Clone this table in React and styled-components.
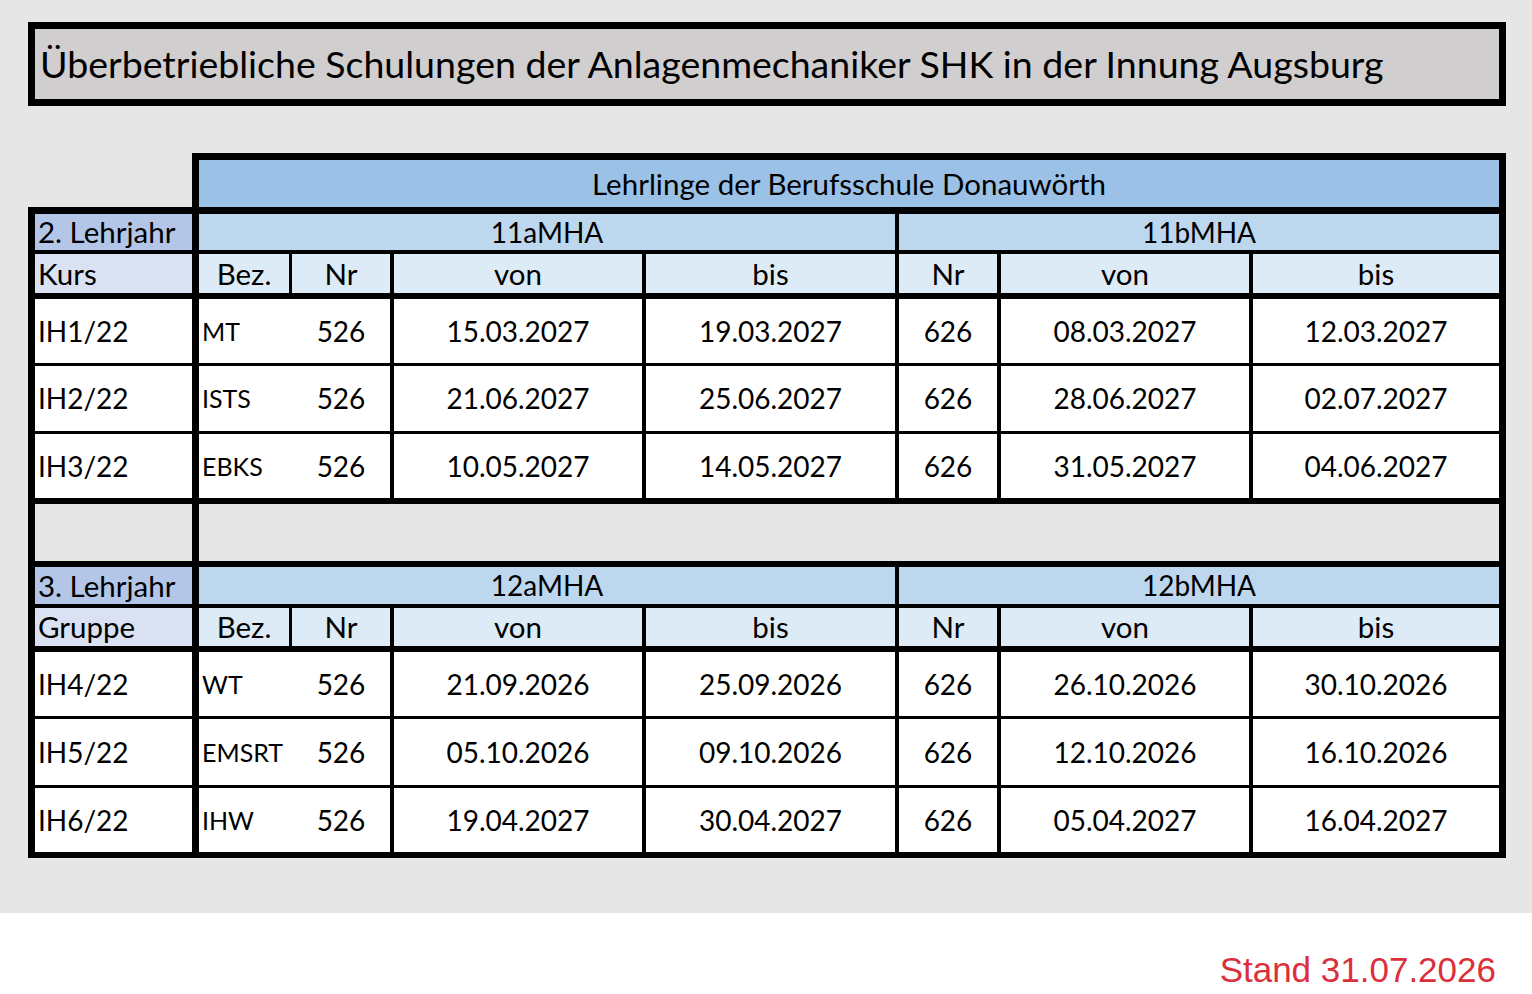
import styled, { createGlobalStyle } from "styled-components";

const GlobalStyle = createGlobalStyle`
  html, body {
    margin: 0;
    padding: 0;
    background: #ffffff;
  }
  body {
    font-family: Lato, "Open Sans", sans-serif;
    color: #000;
  }
`;

const Page = styled.div`
  width: 1532px;
`;

const Sheet = styled.div`
  background: #e6e6e6;
  padding: 22px 26px 55px 28px;
  display: flex;
  flex-direction: column;
  gap: 47px;
`;

const TitleBox = styled.div`
  box-sizing: border-box;
  height: 84px;
  border: 7px solid #000;
  background: #d0cece;
  display: flex;
  align-items: center;
  padding-left: 5px;
`;

const Title = styled.h1`
  margin: 0;
  font-weight: 400;
  font-size: 37.5px;
  line-height: 1;
  white-space: nowrap;
`;

const Table = styled.table`
  width: 1478px;
  table-layout: fixed;
  border-collapse: separate;
  border-spacing: 0;
`;

const Col = styled.col`
  width: ${(p) => p.$w}px;
`;

const Row = styled.tr`
  height: ${(p) => p.$h}px;
`;

const Cell = styled.td`
  box-sizing: border-box;
  padding: 0 ${(p) => (p.$left ? 3 : 2)}px;
  font-size: ${(p) => p.$size || 28}px;
  line-height: 1.15;
  white-space: nowrap;
  text-align: ${(p) => (p.$left ? "left" : "center")};
  vertical-align: middle;
  background: ${(p) => p.$bg || "#ffffff"};
  border-style: solid;
  border-color: #000;
  border-width: ${(p) => p.$t || 0}px ${(p) => p.$r ?? 4}px
    ${(p) => p.$b ?? 3}px ${(p) => p.$l || 0}px;
`;

const Footer = styled.div`
  box-sizing: border-box;
  height: 81px;
  padding: 39px 36px 0 0;
  display: flex;
  justify-content: flex-end;
`;

const Stand = styled.div`
  font-family: "Liberation Sans", Arial, sans-serif;
  font-size: 35px;
  line-height: 35px;
  color: #dc2f3c;
`;

const colors = {
  head: "#9bc2e6",
  group: "#bdd7ee",
  sub: "#ddebf7",
  year: "#b4c6e7",
  kind: "#d9e1f2",
  gap: "#e6e6e6",
};

const widths = [171, 93, 102, 252, 253, 102, 252, 253];
const label = 29.5;

const block1 = {
  year: "2. Lehrjahr",
  kind: "Kurs",
  a: "11aMHA",
  b: "11bMHA",
  rows: [
    ["IH1/22", "MT", "526", "15.03.2027", "19.03.2027", "626", "08.03.2027", "12.03.2027"],
    ["IH2/22", "ISTS", "526", "21.06.2027", "25.06.2027", "626", "28.06.2027", "02.07.2027"],
    ["IH3/22", "EBKS", "526", "10.05.2027", "14.05.2027", "626", "31.05.2027", "04.06.2027"],
  ],
  heights: [67, 68, 70],
};

const block2 = {
  year: "3. Lehrjahr",
  kind: "Gruppe",
  a: "12aMHA",
  b: "12bMHA",
  rows: [
    ["IH4/22", "WT", "526", "21.09.2026", "25.09.2026", "626", "26.10.2026", "30.10.2026"],
    ["IH5/22", "EMSRT", "526", "05.10.2026", "09.10.2026", "626", "12.10.2026", "16.10.2026"],
    ["IH6/22", "IHW", "526", "19.04.2027", "30.04.2027", "626", "05.04.2027", "16.04.2027"],
  ],
  heights: [67, 69, 70],
};

const Block = ({ data, yearHeight, kindHeight }) => (
  <>
    <Row $h={yearHeight}>
      <Cell $left $l={7} $r={7} $b={4} $size={label} $bg={colors.year}>{data.year}</Cell>
      <Cell colSpan={4} $b={4} $bg={colors.group}>{data.a}</Cell>
      <Cell colSpan={3} $r={7} $b={4} $bg={colors.group}>{data.b}</Cell>
    </Row>
    <Row $h={kindHeight}>
      <Cell $left $l={7} $r={7} $b={6} $size={label} $bg={colors.kind}>{data.kind}</Cell>
      <Cell $r={3} $b={6} $size={label} $bg={colors.sub}>Bez.</Cell>
      <Cell $b={6} $size={label} $bg={colors.sub}>Nr</Cell>
      <Cell $b={6} $size={label} $bg={colors.sub}>von</Cell>
      <Cell $b={6} $size={label} $bg={colors.sub}>bis</Cell>
      <Cell $b={6} $size={label} $bg={colors.sub}>Nr</Cell>
      <Cell $b={6} $size={label} $bg={colors.sub}>von</Cell>
      <Cell $r={7} $b={6} $size={label} $bg={colors.sub}>bis</Cell>
    </Row>
    {data.rows.map((r, i) => {
      const last = i === data.rows.length - 1;
      const b = last ? 6 : 3;
      return (
        <Row key={r[0]} $h={data.heights[i]}>
          <Cell $left $l={7} $r={7} $b={b}>{r[0]}</Cell>
          <Cell $left $r={0} $b={b} $size={25}>{r[1]}</Cell>
          <Cell $b={b}>{r[2]}</Cell>
          <Cell $b={b}>{r[3]}</Cell>
          <Cell $b={b}>{r[4]}</Cell>
          <Cell $b={b}>{r[5]}</Cell>
          <Cell $b={b}>{r[6]}</Cell>
          <Cell $r={7} $b={b}>{r[7]}</Cell>
        </Row>
      );
    })}
  </>
);

export default function App() {
  return (
    <Page>
      <GlobalStyle />
      <Sheet>
        <TitleBox>
          <Title>Überbetriebliche Schulungen der Anlagenmechaniker SHK in der Innung Augsburg</Title>
        </TitleBox>
        <Table>
          <colgroup>
            {widths.map((w, i) => (
              <Col key={i} $w={w} />
            ))}
          </colgroup>
          <tbody>
            <Row $h={61}>
              <Cell $r={7} $b={7} $bg="transparent" />
              <Cell colSpan={7} $t={7} $r={7} $b={7} $size={label} $bg={colors.head}>
                Lehrlinge der Berufsschule Donauwörth
              </Cell>
            </Row>
            <Block data={block1} yearHeight={40} kindHeight={45} />
            <Row $h={63}>
              <Cell $l={7} $r={7} $b={6} $bg={colors.gap} />
              <Cell colSpan={7} $r={7} $b={6} $bg={colors.gap} />
            </Row>
            <Block data={block2} yearHeight={41} kindHeight={44} />
          </tbody>
        </Table>
      </Sheet>
      <Footer>
        <Stand>Stand 31.07.2026</Stand>
      </Footer>
    </Page>
  );
}
